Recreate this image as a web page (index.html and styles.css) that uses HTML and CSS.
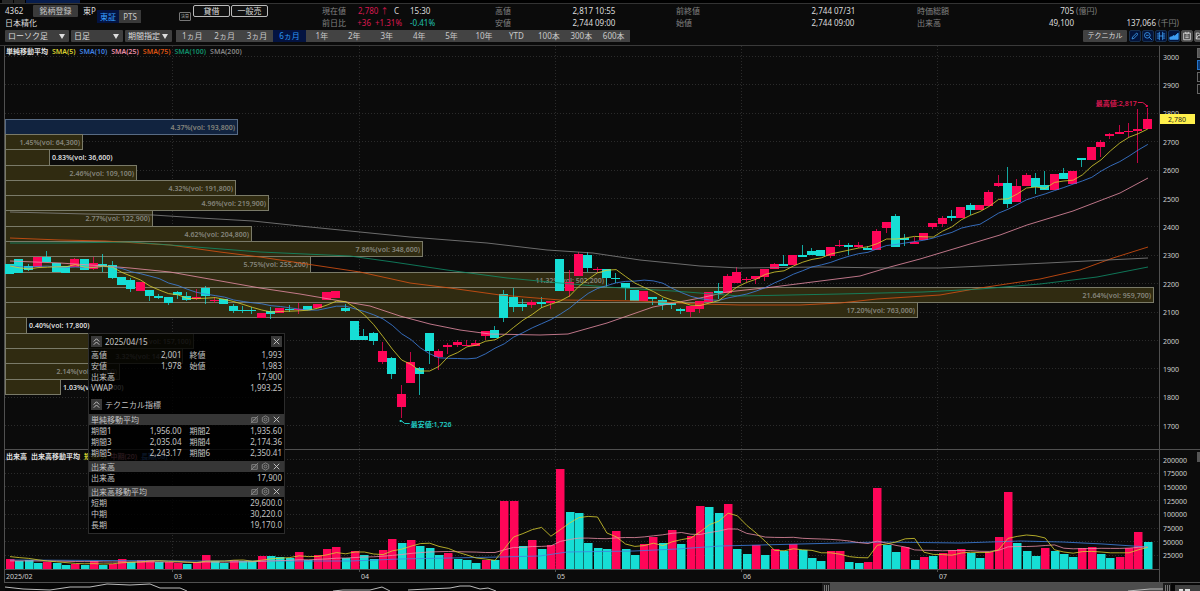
FILE: index.html
```
<!DOCTYPE html>
<html lang="ja">
<head>
  <meta charset="UTF-8">
  <title>4362 日本精化</title>
  <link rel="stylesheet" href="styles.css">
</head>
<body>
  <div class="tabs"><span class="tab-prev"></span><span class="tab-next"></span><span class="tab"></span></div>

  <header class="quote">
    <div class="stock">
      <div class="stock-id">
        <div class="stock-top">
          <span class="code">4362</span>
          <button class="register">銘柄登録</button>
          <span>東P</span>
        </div>
        <h1>日本精化</h1>
      </div>
      <div class="market">
        <button class="on">東証</button><button>PTS</button>
      </div>
      <span class="kessan">決算</span>
      <div class="credit">
        <button>貸借</button><button>一般売</button>
      </div>
    </div>
    <div class="prices">
      <div class="cell now">
        <span class="label">現在値</span><span class="last"><span class="up">2,780 ↑</span><span>C</span></span><span>15:30</span>
        <span class="label">前日比</span><span class="up right">+36</span><span class="up">+1.31%</span><span class="down">-0.41%</span>
      </div>
      <div class="cell">
        <span class="label">高値</span><span class="right">2,817</span><span>10:55</span>
        <span class="label">安値</span><span class="right">2,744</span><span>09:00</span>
      </div>
      <div class="cell prev">
        <span class="label">前終値</span><span class="right">2,744</span><span>07/31</span>
        <span class="label">始値</span><span class="right">2,744</span><span>09:00</span>
      </div>
      <div class="cell cap">
        <span class="label">時価総額</span><span class="right">705</span><span class="unit">(億円)</span><span></span>
        <span class="label">出来高</span><span class="right">49,100</span><span class="right">137,066</span><span class="unit">(千円)</span>
      </div>
    </div>
  </header>

  <nav class="toolbar">
    <span class="pick wide"><select aria-label="チャート種類"><option>ローソク足</option></select></span>
    <span class="pick mid"><select aria-label="足種"><option>日足</option></select></span>
    <span class="pick"><select aria-label="期間"><option>期間指定</option></select></span>
    <div class="periods">
      <button>1ヵ月</button><button>2ヵ月</button><button>3ヵ月</button><button class="on">6ヵ月</button><button>1年</button><button>2年</button><button>3年</button><button>4年</button><button>5年</button><button>10年</button><button>YTD</button><button>100本</button><button>300本</button><button>600本</button>
    </div>
    <button class="technical">テクニカル</button>
    <div class="tools">
      <button aria-label="描画"><svg viewBox="0 0 12 12"><path d="M2.5 9.5l.6-2.2L8 2.4l1.6 1.6-4.9 4.9z"/></svg></button>
      <button aria-label="縮小"><svg viewBox="0 0 12 12"><circle cx="5.2" cy="5.2" r="3.4"/><path d="M3.6 5.2h3.2M7.6 7.6l3 3"/></svg></button>
      <button aria-label="比較"><svg viewBox="0 0 12 12"><path d="M4 1v10M8 1v10M1 3.500h3M8 3.500h3M1 8.500h3M8 8.500h3M1 6h10"/></svg></button>
      <button aria-label="価格帯"><svg viewBox="0 0 12 12"><path class="solid" d="M1 10V7.500l2.500-.5 1.500-1.500 2 .5L11 2.500V10z"/></svg></button>
      <button class="gray" aria-label="保存"><svg viewBox="0 0 12 12"><path d="M2 2.500h8v8H2zM4.500 1v2.500h3V1M4 6h4M4 8h4"/></svg></button>
      <button class="gray" aria-label="開く"><svg viewBox="0 0 12 12"><path d="M1.500 9.500v-7h3l1 1.500h4v1.500M1.500 9.500l2-4h7.500l-2 4z"/></svg></button>
    </div>
  </nav>

  <main class="chart" id="chart">
    <svg id="plot" role="img" aria-label="日足チャート"></svg>
    <p class="legend"><span>単純移動平均</span><span class="s5">SMA(5)</span><span class="s10">SMA(10)</span><span class="s25">SMA(25)</span><span class="s75">SMA(75)</span><span class="s100">SMA(100)</span><span class="s200">SMA(200)</span></p>
    <p class="legend volume"><span>出来高</span><span>出来高移動平均</span><span class="s5">短期(5)</span><span class="s25">中期(20)</span><span class="s10">長期(60)</span></p>

    <div class="side">
      <button class="gray" aria-label="最小化"></button><button class="blue" aria-label="固定"></button><button aria-label="上へ"></button><button aria-label="設定"></button>
    </div>
    <button class="side-volume" aria-label="閉じる"></button>

    <section class="panel">
      <div class="panel-head">
        <button class="fold" aria-label="折りたたむ"><svg viewBox="0 0 12 12"><path d="M3 6l3-3 3 3M3 9.500l3-3 3 3"/></svg></button>
        <span>2025/04/15</span>
        <button class="fold close" aria-label="閉じる"><svg viewBox="0 0 12 12"><path d="M3 3l6 6M9 3l-6 6"/></svg></button>
      </div>
      <table>
        <tr><th>高値</th><td>2,001</td><th>終値</th><td>1,993</td></tr>
        <tr><th>安値</th><td>1,978</td><th>始値</th><td>1,983</td></tr>
        <tr><th>出来高</th><td colspan="3">17,900</td></tr>
        <tr><th>VWAP</th><td colspan="3">1,993.25</td></tr>
      </table>
      <div class="panel-head tech">
        <button class="fold" aria-label="折りたたむ"><svg viewBox="0 0 12 12"><path d="M3 6l3-3 3 3M3 9.500l3-3 3 3"/></svg></button>
        <span>テクニカル指標</span>
      </div>
      <h2>単純移動平均 <span class="acts"></span></h2>
      <table>
        <tr><th>期間1</th><td>1,956.00</td><th>期間2</th><td>1,935.60</td></tr>
        <tr><th>期間3</th><td>2,035.04</td><th>期間4</th><td>2,174.36</td></tr>
        <tr><th>期間5</th><td>2,243.17</td><th>期間6</th><td>2,350.41</td></tr>
      </table>
      <h2>出来高 <span class="acts"></span></h2>
      <table>
        <tr><th>出来高</th><td colspan="3">17,900</td></tr>
      </table>
      <h2>出来高移動平均 <span class="acts"></span></h2>
      <table>
        <tr><th>短期</th><td colspan="3">29,600.0</td></tr>
        <tr><th>中期</th><td colspan="3">30,220.0</td></tr>
        <tr><th>長期</th><td colspan="3">19,170.0</td></tr>
      </table>
    </section>
  </main>

  <script src="chart.js"></script>
</body>
</html>
```

FILE: styles.css
```
* { box-sizing: border-box; }
body {
  margin: 0;
  height: 100vh;
  overflow: hidden;
  display: flex;
  flex-direction: column;
  background: #0b0b0b;
  color: #dcdcdc;
  font: 8px/12px "Noto Sans", "Noto Sans CJK JP", sans-serif;
}
button, select { font: inherit; color: inherit; border: 0; padding: 0; margin: 0; background: #484848; }
h1, h2, p { margin: 0; font-size: inherit; font-weight: normal; }

/* tabs */
.tabs { display: flex; gap: 1px; height: 4px; padding-left: 2px; background: #000; border-bottom: 1px solid #333; flex: none; }
.tab-prev, .tab-next { width: 11px; background: #262626; }
.tab { width: 54px; background: #071d4d; }

/* quote header */
.quote { display: flex; height: 26px; flex: none; }
.stock { display: flex; width: 322px; padding-left: 5px; flex: none; }
.stock-id { width: 92px; }
.stock-top { display: flex; align-items: center; height: 13px; gap: 5px; }
.stock-top .code { width: 23px; }
.register { width: 45px; height: 12px; line-height: 12px; color: #c4c4c4; background: #3b3b3b; border-radius: 1px; flex: none; }
h1 { line-height: 12px; }
.market { display: flex; padding-top: 6px; }
.market button { height: 13px; width: 22px; line-height: 13px; color: #c8c8c8; background: #3a3a3a; }
.market .on { color: #38a0ff; background: #031341; }
.kessan { margin: 8px 2px 0 38px; width: 12px; height: 9px; border: 1px solid #777; border-radius: 1px; font-size: 4px; line-height: 7px; text-align: center; color: #aaa; }
.credit { display: flex; gap: 1px; padding-top: 1px; }
.credit button { width: 37px; height: 12px; line-height: 10px; background: #101010; border: 1px solid #bbb; border-radius: 2px; }
.prices { flex: 1; display: grid; grid-template-columns: 173fr 181fr 241fr 283fr; padding-top: 1px; }
.cell { display: grid; grid-template-columns: 30px 66px 1fr; column-gap: 2px; grid-auto-rows: 12px; align-content: start; white-space: nowrap; }
.now { grid-template-columns: 24px 21px 31px 1fr; column-gap: 4px; }
.last { grid-column: span 2; display: flex; justify-content: space-between; padding: 0 7px 0 8px; }
.prev { grid-template-columns: 30px 124px 1fr; }
.cap { grid-template-columns: 40px 115px 80px 1fr; column-gap: 2px; }
.label, .unit { color: #828282; }
.right { text-align: right; }
.up { color: #d81850; }
.down { color: #20c0ae; }

/* toolbar */
.toolbar { display: flex; gap: 2px; height: 16px; padding-left: 5px; border-bottom: 1px solid #3a3a3a; flex: none; }
.pick { position: relative; width: 47px; height: 12px; }
.pick.wide { width: 64px; }
.pick.mid { width: 52px; }
.pick select { width: 100%; height: 12px; padding-left: 3px; line-height: 12px; appearance: none; border-radius: 1px; background: #3e3e3e; display: block; }
.pick::after { content: ""; position: absolute; right: 4px; top: 4px; border: 3px solid transparent; border-top: 5px solid #ddd; border-bottom: 0; pointer-events: none; }
.periods { display: flex; width: 454px; height: 12px; margin-left: 2px; }
.periods button { flex: 1; line-height: 12px; color: #c8c8c8; background: #434343; }
.periods .on { color: #2b97f5; background: #031341; }
.technical { width: 44px; height: 12px; font-size: 7px; line-height: 12px; margin-left: auto; background: #414141; border-radius: 1px; }
.tools { display: flex; gap: 1px; width: 71px; overflow: hidden; }
.tools button { flex: none; width: 12px; height: 12px; background: #03143c; border: 1px solid #18304f; border-radius: 2px; }
.tools .gray { background: #4a4a4a; border-color: #4a4a4a; }
svg { display: block; fill: none; }
.tools svg { stroke: #3d9df2; width: 10px; height: 10px; }
.tools .gray svg { stroke: #ddd; }
.tools .solid { fill: #3d9df2; }

/* chart */
.chart { position: relative; flex: 1; min-height: 0; overflow: hidden; }
#plot { width: 100%; height: 100%; }
#plot text { font-size: 7px; }
#plot .band-text, #plot .out-text, #plot .note { font-weight: 600; }
.legend { position: absolute; left: 6px; top: 0; display: flex; gap: 4px; font-size: 7px; line-height: 12px; font-weight: 600; color: #e0e0e0; white-space: nowrap; }
.legend.volume { top: 405px; }
.s5 { color: #d9cf2f; }
.s10 { color: #3f82e4; }
.s25 { color: #e98ea6; }
.s75 { color: #dc5312; }
.s100 { color: #10906a; }
.s200 { color: #858585; }
.grid { stroke: #2b2b2b; stroke-dasharray: 1 2; }
.edge { stroke: #505050; }
.red { fill: #ff0558; stroke: #ff0558; }
.teal { fill: #16ded5; stroke: #16ded5; }
.bar { stroke: none; }
.band { fill: #302b11; stroke: #7a7a68; }
.band.cur { fill: #11233f; stroke: #586b84; }
.band-text { fill: #85857c; text-anchor: end; }
.out-text { fill: #ddd; }
.axis { fill: #d0d0d0; }
.line { stroke-width: 1; stroke-opacity: .8; stroke: currentColor; }

.side { position: absolute; left: calc(100% - 3px); top: 2px; display: grid; gap: 2px; }
.side button { width: 10px; height: 10px; background: #101010; border: 1px solid #666; }
.side .gray, .side-volume { background: #555; }
.side .blue { background: #0a3973; border-color: #2676cb; }
.side-volume { position: absolute; left: calc(100% - 3px); top: 406px; width: 10px; height: 10px; }

/* data window */
.panel { position: absolute; left: 88px; top: 287px; width: 197px; height: 201px; border: 1px solid #2c2c2c; background: rgba(0, 0, 0, .84); color: #c4c4c4; line-height: 11px; }
.panel-head { display: flex; align-items: center; height: 15px; padding: 0 2px; gap: 3px; }
.panel-head.tech { margin: 4px 0 2px; }
.fold { width: 11px; height: 11px; background: #393939; }
.close { margin-left: auto; }
.fold svg, .acts svg { width: 11px; height: 11px; stroke: #ccc; }
.panel table { width: 100%; table-layout: fixed; border-collapse: collapse; }
.panel th, .panel td { padding: 0 2px; height: 11px; font-weight: normal; text-align: left; white-space: nowrap; }
.panel th { width: 38px; }
.panel td { text-align: right; }
.panel td + th { padding-left: 6px; width: 44px; }
.panel h2 { display: flex; justify-content: space-between; height: 11px; padding: 0 2px; background: #363636; }
.panel table + h2 { margin-top: 3px; }
.acts { display: flex; }
.acts button { width: 11px; height: 11px; background: none; }
.acts .dim { stroke: #888; }
```

FILE: chart.js
```
// one row per day: colour, body top, body bottom, high, low, volume bar top
const days = `
c 264 274 264 274 r559|c 259 273 259 273 c561|c 266 270 264 271 c560|r 257 267 257 267 c563|c 257 262 251 262 r562|c 263 272 263 272 c563
c 266 273 266 273 c565|r 259 267 258 267 r564|c 259 270 259 270 c565|r 263 269 257 270 r561|c 264 266 254 272 c565|c 265 278 261 279 r564
c 277 285 277 285 r559|c 280 289 278 292 c562|r 282 291 282 291 r560|c 290 296 290 301 r560|c 296 298 294 299 c562|c 297 303 297 305 r562
c 292 295 291 299 r563|c 296 300 292 301 c564|r 297 299 289 300 r562|c 288 296 286 304 r555|r 300 301 297 303 c561|c 299 304 299 304 c563
c 306 311 304 313 r560|c 310 311 306 313 c561|c 310 311 307 314 c561|r 313 318 313 318 r556|c 311 314 307 319 c556|r 308 313 308 313 c557
c 309 310 305 312 c558|r 309 310 303 314 r552|c 306 310 306 310 c560|r 304 308 304 308 r555|r 292 300 292 300 r549|r 291 298 291 298 r547
c 308 311 304 312 c558|c 321 340 321 340 r551|c 336 340 329 340 c555|c 333 341 332 345 c559|r 351 362 342 364 r550|c 358 374 357 379 r539
r 394 407 385 418 c543|r 362 383 352 383 r540|c 368 374 367 395 c546|c 333 351 333 364 c548|r 351 357 349 370 c555|r 345 347 343 354 r553
r 342 345 340 347 c559|r 345 346 340 346 c560|r 343 346 340 346 c563|r 331 336 331 340 r560|c 330 338 326 338 c560|c 294 318 290 322 r501
c 297 307 288 312 r501|c 304 307 299 311 c546|r 302 305 300 308 r540|c 302 304 297 308 c549|r 301 303 301 309 r545|c 259 291 259 291 r469
r 282 291 270 297 c512|r 254 276 252 276 c513|c 255 268 252 272 c543|r 269 270 267 272 c548|c 269 278 269 286 c549|c 278 279 273 283 r531
c 283 288 283 300 c549|c 290 301 290 301 c555|r 291 301 291 301 r544|c 297 299 297 305 r537|c 300 305 298 310 c543|c 303 305 302 309 r530
c 309 311 308 314 c544|r 306 312 306 317 r536|r 301 309 301 313 r506|r 292 302 292 302 c507|c 291 293 283 299 c513|r 276 293 274 293 r504
r 272 283 267 283 c549|r 279 280 277 282 c554|r 276 279 276 284 r545|r 269 277 269 281 c555|r 264 269 263 269 r549|c 264 266 255 266 c551
r 255 265 255 265 r544|c 255 257 245 257 c550|c 251 255 248 255 c558|c 250 256 250 256 c561|r 247 256 247 258 r551|r 245 246 240 247 r551
c 245 247 243 255 c562|r 245 247 242 248 c563|c 248 250 246 250 r562|r 231 250 229 250 r488|r 222 228 222 233 c545|c 216 247 214 247 c552
c 238 240 234 246 r547|r 242 244 237 244 c560|r 233 240 233 240 r557|r 223 227 223 229 c556|r 218 224 216 227 r553|c 216 218 210 221 r550
r 207 218 207 218 r549|c 205 210 203 215 c553|r 205 210 205 210 c558|r 192 206 190 206 r552|r 183 186 175 187 r537|c 183 204 167 208 r492
r 186 202 179 202 c543|r 175 186 173 186 c551|c 178 187 173 194 c556|c 185 190 171 190 r548|r 174 190 174 190 c551|c 173 179 168 179 c554
r 171 184 171 184 c557|c 158 160 158 167 r548|r 147 160 147 160 r547|r 142 147 140 157 c554|r 134 136 133 139 c558|r 132 134 125 134 r557
r 131 132 123 137 r548|r 129 131 109 163 r532|r 119 129 108 129 c542`.trim().split(/[|\n]/).map(row => {
  const f = row.split(' ');
  return { up: f[0] === 'r', top: +f[1], bottom: +f[2], high: +f[3], low: +f[4], volUp: f[5][0] === 'r', vol: +f[5].slice(1) };
});

// price bands: right edge, text
const bands = [
  [237, '4.37%(vol: 193,800)'], [82, '1.45%(vol: 64,300)'], [49, '0.83%(vol: 36,600)'],
  [136, '2.46%(vol: 109,100)'], [235, '4.32%(vol: 191,800)'], [268, '4.96%(vol: 219,900)'],
  [152, '2.77%(vol: 122,900)'], [251, '4.62%(vol: 204,800)'], [422, '7.86%(vol: 348,600)'],
  [310, '5.75%(vol: 255,200)'], [606, '11.32%(vol: 502,200)'], [1153, '21.64%(vol: 959,700)'],
  [917, '17.20%(vol: 763,000)'], [26, '0.40%(vol: 17,800)'], [193, '3.54%(vol: 157,100)'],
  [182, '3.32%(vol: 147,100)'], [119, '2.14%(vol: 95,000)'], [60, '1.03%(vol: 45,800)']
];

const slow = {
  s25: '10,261 60,263 105,266 130,268 170,272 215,280 260,288 300,294 335,300 370,306 400,316 430,324 460,330 490,334 540,335 568,334 607,323 653,307 700,298 727,292 773,287 860,276 890,267 920,259 960,247 1000,235 1027,225 1073,211 1120,193 1148,178',
  s75: '10,238 60,240 105,241 170,245 220,252 260,257 300,263 360,272 410,283 450,288 500,295 560,300 640,301 700,304 740,305 800,305 840,303 877,299 940,295 980,288 1040,279 1080,270 1113,258 1148,247',
  s100: '10,243 60,243 130,242 170,245 260,252 350,256 393,262 447,270 507,278 560,283 607,287 673,291 740,296 840,294 923,292 980,289 1040,284 1097,277 1148,267',
  s200: '10,212 87,214 153,215 200,218 253,221 300,226 360,232 410,237 487,243 547,250 593,253 640,260 700,266 740,268 820,267 890,268 940,268 983,266 1047,263 1107,260 1148,258'
};
const volSlow = '10,560 200,561 350,561 400,559 500,557 540,556 567,552 634,551 677,549 720,546 800,544 880,542 960,543 1020,541 1063,542 1103,544 1148,547';
const months = [[0, '2025/02'], [18, '03'], [38, '04'], [59, '05'], [79, '06'], [100, '07']];

const TOP = 46;
const plot = document.getElementById('plot');

function average(values, n, before) {
  return values.map((v, i) => {
    let sum = 0;
    for (let k = i - n + 1; k <= i; k++) sum += k < 0 ? before : values[k];
    return sum / n;
  });
}

function draw() {
  const box = document.getElementById('chart');
  const w = box.clientWidth, h = box.clientHeight;
  const right = w - 41;
  const s = right / 1159;
  const step = 9.326 * s;
  const x = i => 10 * s + i * step;
  const scaled = pts => pts.split(' ').map(p => { const [a, b] = p.split(','); return a * s + ',' + b; }).join(' ');
  const series = ys => ys.map((y, i) => x(i).toFixed(1) + ',' + y.toFixed(1)).join(' ');
  const line = (cls, pts) => `<polyline class="line ${cls}" points="${pts}"/>`;
  let out = '';

  // grid and price scale
  for (let k = 0; k < 14; k++) {
    const y = 57 + k * 28.4;
    out += `<path class="grid" d="M5 ${Math.round(y) - .5}H${right}"/><text class="axis" x="${right + 4}" y="${y + 2.5}">${3000 - k * 100}</text>`;
  }
  for (let k = 0; k < 8; k++) {
    const y = 460 + k * 13.7;
    out += `<path class="grid" d="M5 ${Math.round(y) - .5}H${right}"/><text class="axis" x="${right + 4}" y="${y + 2.5}">${200000 - k * 25000}</text>`;
  }
  months.forEach(([i, name]) => {
    const mx = Math.round(x(i) - step / 2) - 1;
    if (i) out += `<path class="grid" d="M${mx + .5} 46V569"/><path class="edge" d="M${mx + .5} 569v3"/>`;
    out += `<text class="axis" x="${mx + 2}" y="579">${name}</text>`;
  });

  bands.forEach(([edge, label], i) => {
    const y = Math.round(118.8 + i * 15.28) + .5;
    const next = Math.round(118.8 + (i + 1) * 15.28) + .5;
    const end = edge * s;
    out += `<rect class="band ${i ? '' : 'cur'}" x="5.5" y="${y}" width="${end - 5}" height="${next - y}"/>`;
    out += edge < 80 ? `<text class="out-text" x="${end + 3}" y="${y + 10}">${label}</text>`
                     : `<text class="band-text" x="${end - 2}" y="${y + 10}">${label}</text>`;
  });

  // candles and volume
  days.forEach((d, i) => {
    const cx = Math.round(x(i)) - .5;
    out += `<g class="${d.up ? 'red' : 'teal'}" stroke-opacity=".75"><path d="M${cx} ${d.high}V${d.low}"/><rect class="bar" x="${cx - 4.5}" y="${d.top}" width="9" height="${d.bottom - d.top}"/></g>`;
    out += `<rect class="${d.volUp ? 'red' : 'teal'} bar" x="${cx - 3.5}" y="${d.vol}" width="8.5" height="${569.5 - d.vol}"/>`;
  });

  const close = days.map(d => d.up ? d.top : d.bottom);
  const vol = days.map(d => d.vol);
  for (const name in slow) out += line(name, scaled(slow[name]));
  out += line('s10', series(average(close, 10, 265)));
  out += line('s5', series(average(close, 5, 264)));
  out += line('s10', scaled(volSlow));
  out += line('s25', series(average(vol, 20, 561)));
  out += line('s5', series(average(vol, 5, 556)));

  // high and low notes
  const hi = x(122) - 1, lo = x(42) - 1;
  out += `<text class="note" fill="#d81850" text-anchor="end" x="${hi - 10}" y="106">最高値:2,817</text><path stroke="#d81850" d="M${hi - 9} 102.5h5l4 3"/><rect fill="#ff0558" x="${hi - 1}" y="105" width="2" height="2"/>`;
  out += `<text class="note" fill="#20c8c0" x="${lo + 10}" y="427">最安値:1,726</text><rect fill="#20c8c0" x="${lo - 1}" y="420" width="2" height="2"/><path stroke="#20c8c0" d="M${lo + 1} 421l3 2.500h5"/>`;

  // frame
  out += `<path class="edge" d="M4.500 46V582M4 449.500H${w}M4 569.500H${right}M${right + .5} 46V582M4 582.500H${w}"/>`;
  out += `<rect x="${right + 1}" y="114" width="35" height="10" fill="#fff04c"/><text x="${right + 9}" y="122" fill="#222">2,780</text>`;

  // navigator
  const a = 822 * s, b = 1163 * s;
  out += `<rect x="5" y="583" width="${w}" height="8" fill="#060606"/><rect x="${a}" y="583" width="${b - a}" height="8" fill="#4d4d4d"/>`;
  [a, b].forEach(n => out += `<rect x="${n}" y="583" width="8" height="8" fill="#1c1c1c"/><path stroke="#777" d="M${n + 2.5} 585v6M${n + 4.5} 585v6M${n + 6.5} 585v6"/>`);
  ['5,587 23,589 50,590 70,587 90,587 107,584 130,585 150,584 160,588 180,588 187,591', '333,591 343,590 370,590 382,587 390,591', '408,590 427,589 450,588 460,586 470,586 480,589 488,588 496,591', '1128,591 1150,589 1163,589']
    .forEach(p => out += `<polyline stroke="#bbb" points="${scaled(p)}"/>`);
  out += `<rect x="${right + 16}" y="585" width="30" height="8" fill="#404040"/><path stroke="#ddd" stroke-width="3" d="M${right + 20} 590.500h4m2 0h5"/>`;

  plot.setAttribute('viewBox', `0 ${TOP} ${w} ${h}`);
  plot.innerHTML = out;
}

document.querySelectorAll('.acts').forEach(el => {
  el.innerHTML = '<button aria-label="非表示"><svg class="dim" viewBox="0 0 12 12"><path d="M3 4h6v5H3zM2 10l8-8M4 6.500h4"/></svg></button>' +
    '<button aria-label="設定"><svg class="dim" viewBox="0 0 12 12"><path d="M6 2l3.500 2v4L6 10 2.500 8V4z"/><circle cx="6" cy="6" r="1.500"/></svg></button>' +
    '<button aria-label="閉じる"><svg viewBox="0 0 12 12"><path d="M3 3l6 6M9 3l-6 6"/></svg></button>';
});

draw();
window.addEventListener('resize', draw);
```
